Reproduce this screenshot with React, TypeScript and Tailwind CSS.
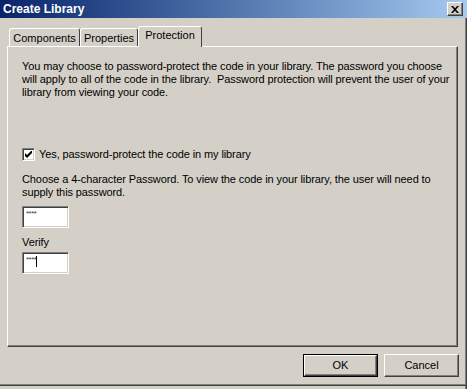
const raised = 'border border-t-white border-l-white border-r-[#404040] border-b-[#404040] shadow-[inset_-1px_-1px_0_#808080]'
const sunken = 'border border-t-[#808080] border-l-[#808080] border-r-white border-b-white shadow-[inset_1px_1px_0_#404040,inset_-1px_-1px_0_#d4d0c8]'

const Tab = ({ label, active, w }: { label: string; active?: boolean; w: string }) => (
  <div
    className={`${w} flex items-center justify-center rounded-t-[3px] border-l border-t border-r border-l-white border-t-white border-r-[#404040] bg-[#d4d0c8] ${
      active ? 'h-[21px] -mb-px relative z-10 pb-[3px]' : 'h-[18px]'
    }`}
  >
    <span className={active ? '' : 'pt-px'}>{label}</span>
  </div>
)

const PasswordBox = ({ caret }: { caret?: boolean }) => (
  <div className={`w-[47px] h-[22px] bg-white ${sunken} flex items-start pl-[3px] pt-[2px]`}>
    <span className="text-[8px] leading-[10px] tracking-[-0.5px] text-[#404040]">****</span>
    {caret && <span className="w-px h-[11px] bg-black mt-[1px]" />}
  </div>
)

export default function App() {
  return (
    <div
      className="w-[467px] h-[389px] bg-[#d4d0c8] text-black text-[11px] leading-[13px] flex flex-col overflow-hidden"
      style={{ fontFamily: '"Liberation Sans", Arial, sans-serif' }}
    >
      {/* title bar */}
      <div className="h-[18px] shrink-0 flex items-center pl-[3px] pr-[4px] bg-gradient-to-r from-[#0a246a] to-[#a6caf0]">
        <span className="text-white font-bold text-[12px]">Create Library</span>
        <div className={`ml-auto w-[16px] h-[14px] bg-[#d4d0c8] ${raised} flex items-center justify-center`}>
          <svg width="8" height="7" viewBox="0 0 8 7">
            <path d="M0 0h2l2 2.2L6 0h2L5 3.5 8 7H6L4 4.8 2 7H0l3-3.5z" fill="black" />
          </svg>
        </div>
      </div>

      <div className="flex-1 flex flex-col border-r border-r-[#404040] shadow-[inset_-1px_0_0_#808080]">
        <div className="pt-[8px] pl-[7px] pr-[8px]">
          {/* tabs */}
          <div className="flex items-end pl-[2px] h-[20px]">
            <Tab label="Components" w="w-[71px]" />
            <Tab label="Properties" w="w-[58px]" />
            <Tab label="Protection" w="w-[64px]" active />
          </div>

          {/* panel */}
          <div className={`h-[301px] ${raised} pt-[13px] pl-[14px] pr-[4px] whitespace-nowrap tracking-[-0.1px]`}>
            <p>
              You may choose to password-protect the code in your library. The password you choose
              <br />
              will apply to all of the code in the library.&nbsp; Password protection will prevent the user of your
              <br />
              library from viewing your code.
            </p>

            <div className="flex items-center gap-[4px] mt-[49px]">
              <div className={`w-[13px] h-[13px] bg-white ${sunken} flex items-center justify-center`}>
                <svg width="7" height="7" viewBox="0 0 7 7">
                  <path d="M0 2v3l2 2 5-5V-1L2 4z" fill="black" />
                </svg>
              </div>
              <span>Yes, password-protect the code in my library</span>
            </div>

            <p className="mt-[12px]">
              Choose a 4-character Password. To view the code in your library, the user will need to
              <br />
              supply this password.
            </p>
            <div className="mt-[7px]">
              <PasswordBox />
            </div>
            <p className="mt-[8px]">Verify</p>
            <div className="mt-[3px]">
              <PasswordBox caret />
            </div>
          </div>
        </div>

        {/* buttons */}
        <div className="flex justify-end gap-[6px] pr-[7px] mt-[7px]">
          <div className="w-[75px] h-[23px] border border-black">
            <div className={`w-full h-full ${raised} flex items-center justify-center`}>OK</div>
          </div>
          <div className={`w-[75px] h-[23px] ${raised} flex items-center justify-center`}>Cancel</div>
        </div>

        <div className="mt-auto mb-[3px] h-[2px] border-t border-t-[#808080] border-b border-b-[#404040]" />
      </div>
    </div>
  )
}
